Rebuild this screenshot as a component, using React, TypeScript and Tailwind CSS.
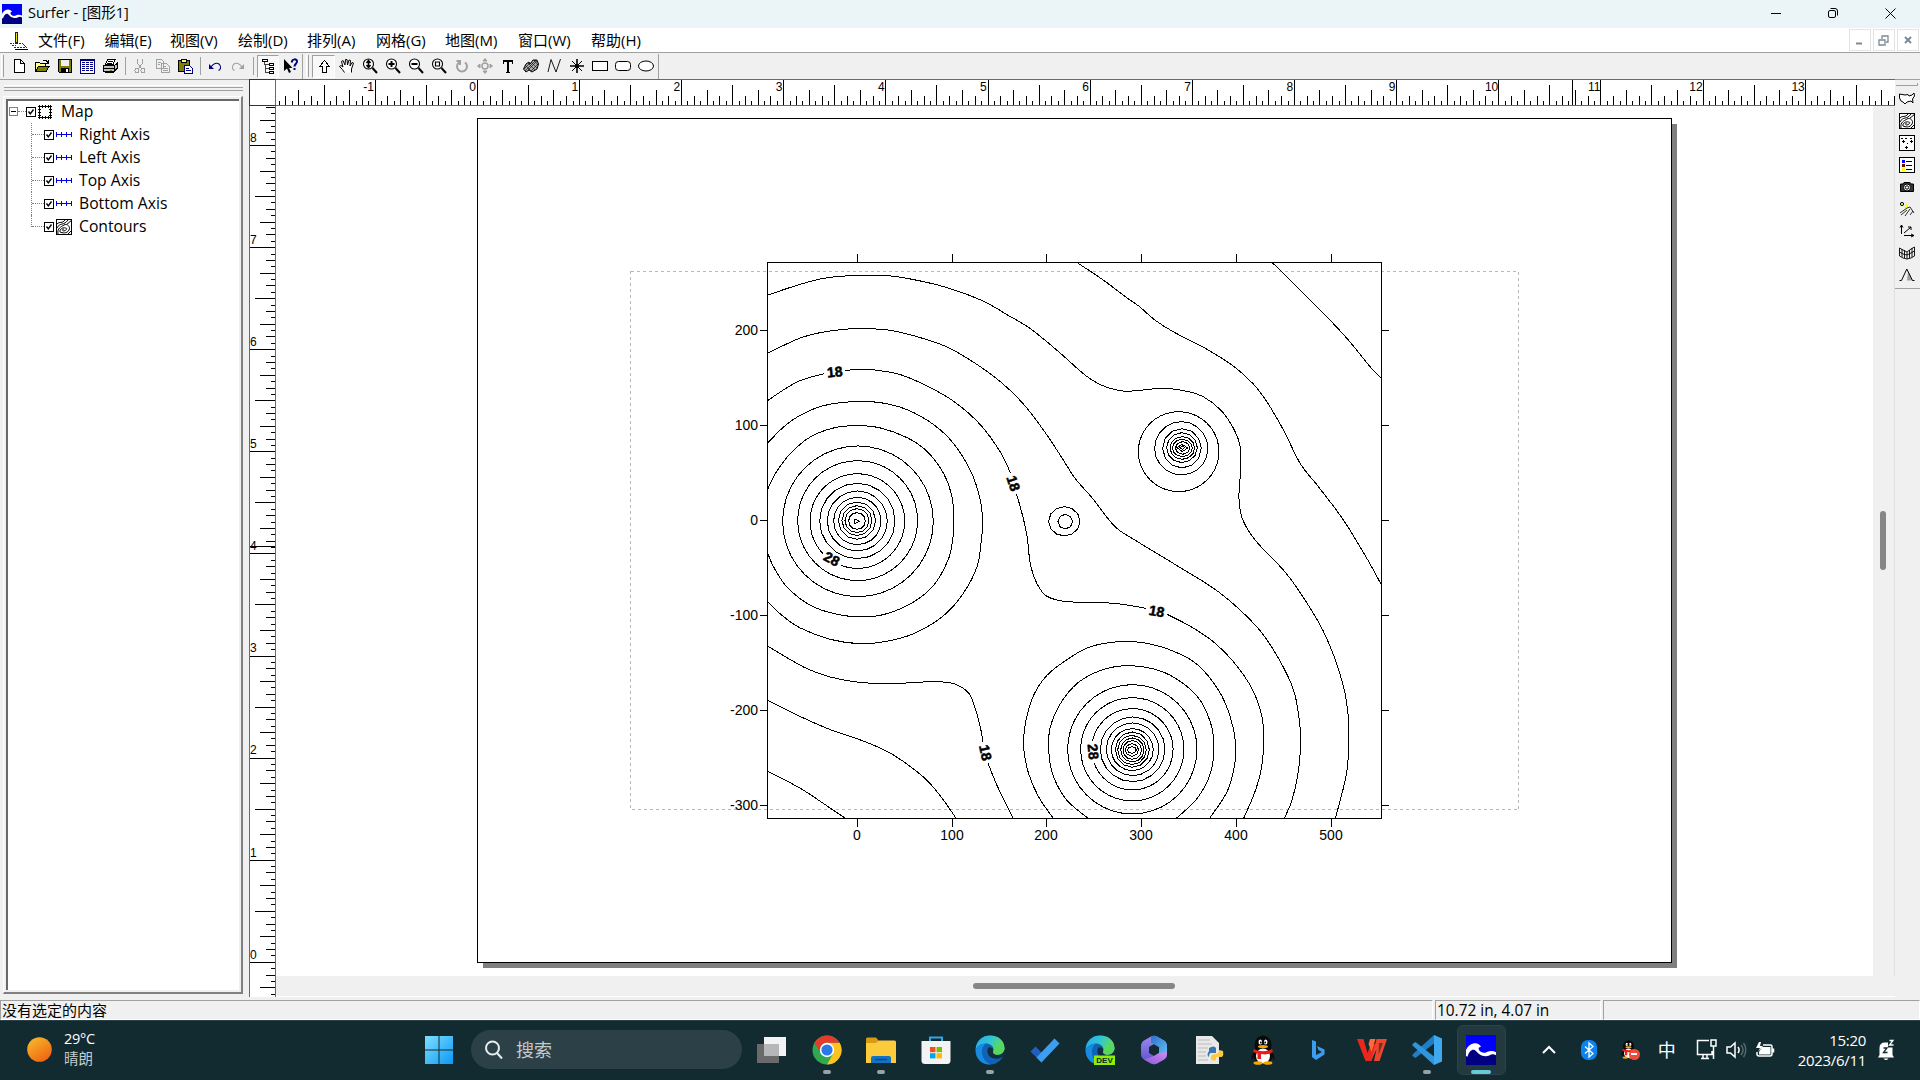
import React from "react";

type Pt = [number, number];

/* ---------- helpers ---------- */

function smooth(p: Pt[]): string {
  let d = `M${p[0][0]},${p[0][1]}`;
  for (let i = 0; i < p.length - 1; i++) {
    const a = p[i - 1] || p[i];
    const b = p[i];
    const c = p[i + 1];
    const e = p[i + 2] || c;
    d += `C${b[0] + (c[0] - a[0]) / 6},${b[1] + (c[1] - a[1]) / 6} ${c[0] - (e[0] - b[0]) / 6},${c[1] - (e[1] - b[1]) / 6} ${c[0]},${c[1]}`;
  }
  return d;
}

/* ---------- contour data (three units per pixel) ---------- */

const LINES: Pt[][] = [
  [[1657, 68], [1720, 130], [1820, 230], [1885, 300], [1950, 380], [1984, 415]],
  [[1072, 68], [1150, 120], [1220, 173], [1255, 197], [1305, 240], [1360, 275], [1460, 327], [1540, 378], [1600, 432], [1640, 485], [1690, 570], [1740, 670], [1795, 740], [1870, 840], [1943, 960], [1984, 1035]],
  [[143, 164], [230, 135], [300, 116], [360, 108], [430, 105], [510, 107], [600, 122], [690, 145], [790, 183], [860, 223], [930, 265], [1010, 330], [1095, 405], [1140, 433], [1180, 447], [1215, 453], [1260, 450], [1330, 444], [1400, 453], [1450, 470], [1500, 508], [1535, 556], [1558, 610], [1562, 660], [1559, 720], [1556, 775], [1566, 835], [1605, 900], [1690, 990], [1735, 1050], [1800, 1155], [1840, 1245], [1870, 1340], [1883, 1420], [1886, 1500], [1880, 1590], [1865, 1660], [1845, 1734]],
  [[143, 338], [235, 295], [300, 277], [370, 267], [430, 265], [510, 270], [600, 292], [680, 320], [760, 366], [840, 424], [910, 492], [970, 570], [1020, 645], [1065, 715], [1115, 772], [1183, 858], [1245, 900], [1365, 973], [1495, 1055], [1610, 1160], [1675, 1255], [1720, 1350], [1737, 1440], [1741, 1510], [1733, 1600], [1715, 1680], [1692, 1734]],
  [[143, 480], [230, 425], [312, 400]],
  [[375, 390], [410, 388], [455, 388], [540, 403], [620, 437], [700, 483], [780, 553], [840, 635], [870, 697]],
  [[888, 760], [900, 800], [915, 860], [922, 900], [930, 970], [950, 1030], [980, 1068], [1040, 1084], [1180, 1089], [1277, 1104]],
  [[1340, 1122], [1410, 1158], [1480, 1205], [1540, 1265], [1595, 1345], [1625, 1430], [1630, 1510], [1622, 1590], [1602, 1660], [1570, 1734]],
  [[143, 1218], [200, 1252], [260, 1285], [330, 1310], [400, 1324], [480, 1330], [560, 1328], [640, 1324], [700, 1330], [745, 1358], [765, 1405], [780, 1460], [788, 1505]],
  [[803, 1568], [830, 1635], [878, 1734]],
  [[143, 1380], [230, 1424], [330, 1468], [410, 1495], [490, 1528], [550, 1564], [620, 1620], [670, 1680], [707, 1734]],
  [[143, 1593], [240, 1644], [310, 1690], [375, 1734]],
  [[143, 607], [190, 560], [240, 525], [310, 496], [400, 484], [480, 487], [560, 508], [640, 553], [700, 610], [750, 690], [778, 770], [787, 842], [783, 900], [770, 980], [725, 1065], [665, 1130], [580, 1180], [500, 1203], [420, 1210], [330, 1197], [240, 1163], [185, 1125], [143, 1085]],
  [[143, 745], [165, 700], [210, 640], [270, 590], [340, 563], [410, 556], [480, 563], [560, 592], [620, 633], [670, 700], [695, 770], [701, 842], [697, 900], [683, 960], [640, 1035], [580, 1085], [500, 1120], [430, 1130], [350, 1122], [270, 1095], [200, 1040], [160, 980], [143, 940]],
  [[999, 1734], [955, 1670], [925, 1600], [912, 1540], [910, 1500], [917, 1440], [940, 1365], [980, 1305], [1040, 1258], [1100, 1223], [1160, 1208], [1220, 1204], [1280, 1209], [1360, 1233], [1430, 1272], [1495, 1350], [1530, 1430], [1546, 1510], [1542, 1580], [1520, 1655], [1468, 1734]],
  [[1103, 1734], [1040, 1680], [1000, 1610], [986, 1540], [990, 1460], [1030, 1375], [1090, 1315], [1180, 1280], [1270, 1280], [1350, 1305], [1430, 1367], [1470, 1445], [1481, 1520], [1470, 1600], [1430, 1675], [1368, 1734]],
];

const RINGS: [number, number, number, number][] = [
  [413, 843, 226, 226], [412, 841, 180, 180], [411, 842, 113, 113], [411, 842, 90, 90],
  [411, 842, 71, 71], [410, 841, 56, 56], [410, 841, 45, 45], [410, 841, 36, 36], [410, 842, 25, 25],
  [1375, 634, 121, 120], [1383, 624, 80, 80], [1385, 624, 58, 59], [1385, 622, 46, 45], [1386, 623, 37, 34],
  [1386, 623, 30, 26], [1387, 623, 22, 19],
  [1032, 843, 47, 44], [1035, 844, 22, 22],
  [1236, 1527, 194, 194], [1236, 1527, 155, 155], [1237, 1527, 97, 97], [1237, 1527, 79, 79], [1236, 1528, 63, 63],
  [1236, 1528, 51, 53], [1235, 1529, 43, 44], [1236, 1529, 35, 36], [1236, 1529, 28, 28], [1235, 1529, 20, 19], [1235, 1529, 13, 10],
];

const LABELS: [string, number, number, number][] = [
  ["18", 344, 396, -6], ["18", 880, 730, 72], ["28", 335, 957, 28],
  ["18", 1310, 1114, 10], ["18", 796, 1538, 78], ["28", 1119, 1535, 84],
];

function ring(cx: number, cy: number, rx: number, ry: number) {
  const n = rx < 25 ? 8 : rx < 60 ? 12 : rx < 120 ? 20 : 40;
  return Array.from({ length: n }, (_, i) => {
    const t = (i / n) * Math.PI * 2;
    return `${cx + Math.cos(t) * rx},${cy + Math.sin(t) * ry}`;
  }).join(" ");
}

function ContourMap() {
  const xs = [[0, 857], [100, 952], [200, 1046], [300, 1141], [400, 1236], [500, 1331]];
  const ys = [[200, 330], [100, 425], [0, 520], [-100, 615], [-200, 710], [-300, 805]];
  return (
    <svg className="block" width="1597" height="870" viewBox="276 106 1597 870" shapeRendering="crispEdges">
      <rect x="483" y="124" width="1194" height="844" fill="#808080" />
      <rect x="477.5" y="118.5" width="1194" height="844" fill="#fff" stroke="#000" />
      <rect x="630.5" y="271.5" width="888" height="538" fill="none" stroke="#b8b8b8" strokeDasharray="3 3" />
      <g transform="translate(720.3 240.3) scale(0.333333)" fill="none" stroke="#000">
        {LINES.map((l, i) => <path key={i} d={smooth(l)} vectorEffect="non-scaling-stroke" />)}
        {RINGS.map((r, i) => <polygon key={i} points={ring(...r)} vectorEffect="non-scaling-stroke" />)}
        <path d="M363 976A142 142 0 1 0 308 940" vectorEffect="non-scaling-stroke" />
        <path d="M1117 1501A122 122 0 1 1 1121 1567" vectorEffect="non-scaling-stroke" />
        <path d="M1370 622L1386 612L1402 623L1386 634ZM1379 622L1386 617L1393 622L1386 627ZM402 836L418 843L403 850Z" vectorEffect="non-scaling-stroke" />
      </g>
      <rect x="767.5" y="262.5" width="614" height="556" fill="none" stroke="#000" />
      {xs.map(([v, x]) => (
        <g key={v}>
          <rect x={x} y="254" width="1" height="8" />
          <rect x={x} y="819" width="1" height="8" />
          <text x={x} y="840" textAnchor="middle" fontSize="14" fontFamily="Liberation Sans, sans-serif">{v}</text>
        </g>
      ))}
      {ys.map(([v, y]) => (
        <g key={v}>
          <rect x="760" y={y} width="7" height="1" />
          <rect x="1382" y={y} width="7" height="1" />
          <text x="758" y={y + 5} textAnchor="end" fontSize="14" fontFamily="Liberation Sans, sans-serif">{v}</text>
        </g>
      ))}
      {LABELS.map(([t, x, y, a], i) => (
        <text key={i} transform={`translate(${720 + x / 3} ${240 + y / 3}) rotate(${a})`} y="4.8" textAnchor="middle" fontSize="14" fontWeight="700" stroke="#000" strokeWidth="0.5" fontFamily="Liberation Sans, sans-serif">{t}</text>
      ))}
    </svg>
  );
}

function tickLen(i: number) {
  const m = ((i % 16) + 16) % 16;
  if (m === 0) return 26;
  if (m === 8) return 20;
  if (m % 4 === 0) return 15;
  if (m % 2 === 0) return 9;
  return 4;
}

function TopRuler() {
  const ticks = Array.from({ length: 254 }, (_, k) => k - 31).filter((i) => 477 + i * 6.384 < 1895);
  return (
    <svg className="block" width="1619" height="27" viewBox="276 79 1619 27" shapeRendering="crispEdges">
      <rect x="276" y="79" width="1619" height="27" fill="#fff" />
      {ticks.map((i) => {
        const h = tickLen(i);
        return <rect key={i} x={Math.floor(477.3 + i * 6.384)} y={105 - h} width="1" height={h} />;
      })}
      {Array.from({ length: 15 }, (_, k) => k - 1).map((n) => (
        <text key={n} x={(n > 9 ? 476.8 : 476) + n * 102.15} y="91" textAnchor="end" fontSize="12" fontFamily="Liberation Sans, sans-serif">{n}</text>
      ))}
      <rect x="1572" y="79" width="1" height="26" />
      <rect x="276" y="79" width="1619" height="1" fill="#696969" />
      <rect x="276" y="105" width="1619" height="1" fill="#696969" />
    </svg>
  );
}

function LeftRuler() {
  const ticks = Array.from({ length: 140 }, (_, k) => k - 5);
  return (
    <svg className="block" width="27" height="891" viewBox="249 106 27 891" shapeRendering="crispEdges">
      <rect x="249" y="106" width="27" height="891" fill="#fff" />
      {ticks.map((i) => {
        const w = tickLen(i);
        return <rect key={i} x={275 - w} y={Math.floor(962.3 - i * 6.381)} width={w} height="1" />;
      })}
      {[0, 1, 2, 3, 4, 5, 6, 7, 8].map((n) => (
        <text key={n} x="250" y={958.6 - n * 102.1} fontSize="12" fontFamily="Liberation Sans, sans-serif">{n}</text>
      ))}
      <rect x="250" y="546" width="25" height="1" />
      <rect x="249" y="106" width="1" height="891" fill="#696969" />
      <rect x="275" y="106" width="1" height="891" fill="#696969" />
    </svg>
  );
}

/* ---------- small drawings ---------- */

function Ico({ children, w = 16, vb = "0 0 16 16", crisp = true }: { children: React.ReactNode; w?: number; vb?: string; crisp?: boolean }) {
  return (
    <svg width={w} height={w} viewBox={vb} fill="none" stroke="#000" shapeRendering={crisp ? "crispEdges" : "auto"} className="shrink-0">
      {children}
    </svg>
  );
}

function SurferLogo({ size }: { size: number }) {
  return (
    <svg width={size} height={size} viewBox="0 0 20 20" className="shrink-0">
      <rect width="20" height="20" fill="#0000ff" />
      <path d="M0 20V13L5 8L9 11L13 14L20 12V20Z" fill="#000080" />
      <path d="M0 14V10C1 7.500 3 6 5.500 5.500C7.500 5.300 9.500 6.300 10 8C9 7.800 8.200 8.300 8.500 9.500C9 11.200 11 12.200 13 11.800C15 11 16.500 10 20 11.500V13.500C18.500 12.500 17 12.800 15.500 13.600C13.500 14.500 11 14.200 9.200 13C7.500 12 7 10.500 5.500 9.800C3.500 9.500 2 11 1 14.500Z" fill="#fff" />
    </svg>
  );
}

const Lens = ({ children }: { children?: React.ReactNode }) => (
  <Ico crisp={false}>
    <circle cx="6.500" cy="6" r="5" strokeWidth="1.100" fill="#fff" />
    <path d="M10.500 10L15 15" strokeWidth="2" />
    {children}
  </Ico>
);

const MAIN_ICONS: React.ReactNode[] = [
  <Ico><path d="M3.500 1.500H9.500L13.500 5.500V14.500H3.500ZM9.500 1.500V5.500H13.500" fill="#fff" /></Ico>,
  <Ico><path d="M1.500 13.500V4.500H5.500L6.500 5.500H11.500V8" fill="#ffff80" /><path d="M1.500 13.500L4.500 8.500H15L12 13.500Z" fill="#808000" /><path d="M9 2.500H12L14 4.500M14 2V5H11" /></Ico>,
  <Ico><path d="M1.500 1.500H14.500V14.500H2.500L1.500 13.500Z" fill="#808000" /><path d="M4 2H12V8H4Z" fill="#f0f0f0" stroke="none" /><path d="M4 10H12V14H4Z" fill="#000" stroke="none" /><path d="M9 11H11V14H9Z" fill="#fff" stroke="none" /></Ico>,
  <Ico><path d="M1.500 1.500H15.500V15.500H1.500Z" fill="#fff" stroke="#000080" /><path d="M1 2.500H15" stroke="#000080" strokeWidth="1" /><path d="M3 4.500H6M7 4.500H10M11 4.500H14M3 6.500H6M7 6.500H10M11 6.500H14M3 8.500H6M7 8.500H10M11 8.500H14M3 10.500H6M7 10.500H10M11 10.500H14M3 12.500H6M7 12.500H10M11 12.500H14" stroke="#000080" /></Ico>,
  <Ico><path d="M5.500 1.500H13L11 6.500H3.500Z" fill="#fff" /><path d="M6 3.500H11M5 5.500H10" /><path d="M1.500 7.500H12.500L15 5.500V10.500L12.500 13.500H1.500Z" fill="#c0c0c0" /><path d="M3 14.500H12M2 10.500H12M12.500 8V13" /><path d="M8 12H10" stroke="#808000" /></Ico>,
  <i className="h-[18px] w-px bg-[#a0a0a0]" />,
  <Ico><g stroke="#a0a0a0"><path d="M5.500 1V5L9.500 11M10.500 1V5L6.500 11" /><circle cx="5" cy="12.500" r="2" /><circle cx="11" cy="12.500" r="2" /></g></Ico>,
  <Ico><g stroke="#a0a0a0" fill="#f0f0f0"><path d="M1.500 1.500H6.500L8.500 3.500V10.500H1.500ZM6.500 5.500H11.500L14.500 8.500V14.500H6.500Z" /><path d="M3 4.500H6M3 6.500H5M8 8.500H11M8 10.500H13M8 12.500H13" /></g></Ico>,
  <Ico><path d="M1.500 2.500H12.500V13.500H1.500Z" fill="#808000" /><path d="M4.500 1.500H9.500V4.500H4.500Z" fill="#ffff80" /><path d="M7.500 7.500H12.500L15.500 10.500V15.500H7.500Z" fill="#fff" stroke="#000080" /><path d="M9 10.500H12M9 12.500H14" stroke="#000080" /></Ico>,
  <i className="h-[18px] w-px bg-[#a0a0a0]" />,
  <Ico crisp={false}><path d="M2 6V11H7Z" fill="#000080" stroke="none" /><path d="M4 9C6 5.500 10 4 12.500 6.500C14.500 9 13.500 11.500 11.500 12.500" stroke="#000080" strokeWidth="1.100" /></Ico>,
  <Ico crisp={false}><path d="M14 6V11H9Z" fill="#a0a0a0" stroke="none" /><path d="M12 9C10 5.500 6 4 3.500 6.500C1.500 9 2.500 11.500 4.500 12.500" stroke="#a0a0a0" strokeWidth="1.100" /></Ico>,
  <i className="h-[18px] w-px bg-[#a0a0a0]" />,
  <Ico><path d="M2.500 1.500H7.500V3.500H2.500ZM9.500 5.500H13.500V7.500H9.500ZM9.500 9.500H13.500V11.500H9.500ZM9.500 13.500H13.500V15.500H9.500Z" fill="#fff" /><path d="M4.500 4V6.500H9M5.500 6V14.500H9M5.500 10.500H9" stroke="#444" /></Ico>,
  <Ico crisp={false}><path d="M1 1V13L4 10.500L6 15L8 14L6 10H9.500Z" fill="#000" stroke="none" /><path d="M8.800 4.500C8.800 .5 14.200 .5 14 3.500C13.800 6 11.500 6 11.500 8.500M11.500 10V12" stroke="#000080" strokeWidth="2" /></Ico>,
];

const DRAW_ICONS: React.ReactNode[] = [
  <Ico><path d="M8.500 2.500L13.500 8.500H10.500V14.500H6.500V8.500H3.500Z" fill="#fff" /></Ico>,
  <Ico crisp={false}><path d="M5.500 14.500L3.500 11.500L.5 8.500L2 7.500L4 9L2.500 3.500L4 2.500L6 7L6.500 1.500H8L8.500 7L10 2L11.500 2.500L11 8L13 4.500L14.500 5L12.500 11V14.500" fill="#fff" /></Ico>,
  <Lens><path d="M6.500 2.500V9.500M4.500 5L6.500 2.500L8.500 5M4.500 7L6.500 9.500L8.500 7" strokeWidth="1.500" /></Lens>,
  <Lens><path d="M3.500 6H9.500M6.500 3V9" strokeWidth="2" /></Lens>,
  <Lens><path d="M3.500 6H9.500" strokeWidth="2" /></Lens>,
  <Lens><path d="M4.500 4H8.500V8H4.500Z" strokeWidth="1.200" /></Lens>,
  <Ico crisp={false}><path d="M5 4.500A5 5 0 1 0 11 4.500M2.500 3H6V7" stroke="#a0a0a0" strokeWidth="2" /></Ico>,
  <Ico crisp={false}><g stroke="#a0a0a0"><circle cx="8" cy="8" r="3" strokeWidth="1.500" /><path d="M8 .5L10 3H6ZM8 15.500L10 13H6ZM.5 8L3 6V10ZM15.500 8L13 6V10Z" fill="#a0a0a0" /></g></Ico>,
  <Ico><path d="M3 3H13M8 3V14" strokeWidth="2" /><path d="M3.500 2V6M12.500 2V6M6 14H10" /></Ico>,
  <Ico crisp={false}><path d="M.5 11L3 6L6 4L7 6L10 2H14L15.500 6L14 11L9 14L6 12L3 14Z" fill="#aaa" /><path d="M1 11L7 5M2 13L13 2M5 12L14 3M8 13L15 6M2 7L8 13M5 5L12 12M8 4L14 10M11 2L15 7" strokeWidth=".6" /></Ico>,
  <Ico crisp={false}><path d="M2 14L5 1.500L10 14L14.500 1" strokeWidth=".9" /></Ico>,
  <Ico crisp={false}><path d="M8 1V15M1 8H15" strokeWidth="1.600" /><path d="M3 3L13 13M13 3L3 13" /><circle cx="8" cy="8" r="1.500" fill="#000" /></Ico>,
  <Ico><path d="M.5 3.500H15.500V12.500H.5Z" fill="#fff" /></Ico>,
  <Ico crisp={false}><rect x=".5" y="3.500" width="15" height="9" rx="3" fill="#fff" /></Ico>,
  <Ico crisp={false}><ellipse cx="8" cy="8" rx="7.500" ry="5" fill="#fff" /></Ico>,
];

const ContourGlyph = () => (
  <Ico crisp={false}>
    <rect x=".5" y=".5" width="15" height="15" fill="#fff" />
    <path d="M1 5C4 2 6 5 9 1M1 9C4 3 8 7 12 1M11 5C14 4 13 2 15 2M2 15C1 9 5 8 8 6C11 4 15 8 13 11C11 15 6 14 4 13C3 10 8 8 9 9C12 9 11 11 8 12C6 12 6 10 8 10M12 15L15 12" />
  </Ico>
);

const SIDE_ICONS: React.ReactNode[] = [
  <Ico crisp={false}><path d="M.5 3L6 4L9 3.500L10 5L13 4L15 2L15.500 5L13.500 8L14 12L12 10L8 11L6 13L4 11L2 10L.5 7Z" fill="#fff" /></Ico>,
  <ContourGlyph />,
  <Ico><rect x=".5" y=".5" width="15" height="15" fill="#fff" /><path d="M2 3H4M6 3H8M11 3H13M3 6.500H6M4.500 5V8M11 6.500H14M12.500 5V8M6 12.500H9M7.500 11V14M8 8H9" /></Ico>,
  <Ico><rect x=".5" y=".5" width="15" height="15" fill="#fff" /><path d="M3 4.500H6" stroke="#00f" strokeWidth="3" /><path d="M3 8.500H6" stroke="#800000" strokeWidth="3" /><path d="M3 12.500H6" stroke="#ff0" strokeWidth="3" /><path d="M7 4.500H13M7 8.500H13M7 12.500H13" /></Ico>,
  <Ico crisp={false}><path d="M1.500 5H4L5 3.500H11L12 5H14.500V12.500H1.500Z" fill="#333" /><circle cx="8" cy="8.500" r="3.500" fill="#fff" /><circle cx="8" cy="8.500" r="1.700" /></Ico>,
  <Ico crisp={false}><circle cx="3" cy="3" r="1.600" fill="#ff0" /><path d="M6 5L9 3M5 7L9 5" stroke="#ff0" strokeWidth="1.300" /><path d="M1 12L8 7L11 6L15 12M2 14L8 9M6 15L11 8M11 14L14 10" strokeWidth=".8" /></Ico>,
  <Ico crisp={false}><path d="M2.500 11V2M1 4.500L2.500 2L4 4.500M5 12.500H15M12 11L15 12.500L12 14M5 10L12 4M9 4H12V7" /></Ico>,
  <Ico crisp={false}><path d="M.5 3L4 5L8 7L12 4L15.500 2V11L12 13L8 14L4 13L.5 11ZM.5 7L4 9L8 10L12 8L15.500 6M3 4V12M5.500 5V13M8 7V14M10.500 5V13M13 3V12" fill="none" strokeWidth=".9" /></Ico>,
  <Ico crisp={false}><path d="M9 4L8 13.500H13L10 6Z" fill="#a0a0a0" stroke="none" /><path d="M.5 13.500H2.500L7.800 2L13.500 13.500H15.500" /></Ico>,
];

const AxisGlyph = () => (
  <Ico><path d="M0 7.500H16M.5 5V10M5.500 5V10M10.500 5V10M15.500 5V10" stroke="#0000e0" /></Ico>
);

const Check = () => (
  <svg width="10" height="10" viewBox="0 0 10 10" className="shrink-0">
    <rect x=".5" y=".5" width="9" height="9" fill="#fff" stroke="#000" />
    <path d="M2.500 4.500L4.300 6.800L7.500 2.500" fill="none" stroke="#000" strokeWidth="1.400" />
  </svg>
);

/* ---------- panels ---------- */

const MENUS: [string, string][] = [
  ["文件(F)", "w-[66.5px]"], ["编辑(E)", "w-[65.5px]"], ["视图(V)", "w-[68px]"], ["绘制(D)", "w-[69px]"], ["排列(A)", "w-[69px]"],
  ["网格(G)", "w-[69px]"], ["地图(M)", "w-[73px]"], ["窗口(W)", "w-[73px]"], ["帮助(H)", "w-[70px]"],
];

function Tree() {
  const rows = ["Right Axis", "Left Axis", "Top Axis", "Bottom Axis", "Contours"];
  return (
    <div className="flex w-[249px] shrink-0 flex-col border-t border-[#a0a0a0] pl-[3px] pr-[6px]">
      <div className="mt-[5px] ml-px h-[3px] border-b border-t border-[#a0a0a0] border-t-white" />
      <div className="ml-px h-[3px] border-b border-[#a0a0a0]" />
      <div className="mt-[5px] h-[898px] border-b-2 border-l border-r-2 border-t border-[#808080] border-l-white border-t-white p-[2px]">
        <div className="h-full border-l-2 border-t-2 border-[#696969] bg-white text-[15.7px]">
          <div className="-mt-px flex h-[23px] items-center pl-px">
            <span className="flex h-[9px] w-[9px] items-center justify-center border border-[#808080]"><i className="h-px w-[5px] bg-black" /></span>
            <span className="w-[8px] border-b border-dotted border-[#808080]" />
            <Check />
            <svg width="16" height="16" viewBox="0 0 16 16" className="ml-[1px]" shapeRendering="crispEdges" fill="none" stroke="#000">
              <path d="M1 2.500H15M1 13.500H15M2.500 1V15M13.500 1V15M5.500 1V4M8.500 1V4M11 1V4M5.500 12V15M8.500 12V15M11 12V15M1 5.500H4M1 8.500H4M1 11H4M12 5.500H15M12 8.500H15M12 11H15" />
            </svg>
            <span className="ml-[8px]">Map</span>
          </div>
          {rows.map((r, i) => (
            <div key={r} className="flex h-[23px] items-center pl-[23px]">
              <span className={i === 4 ? "h-[12px] w-px self-start border-l border-dotted border-[#808080]" : "h-full w-px border-l border-dotted border-[#808080]"} />
              <span className="w-[12px] border-b border-dotted border-[#808080]" />
              <Check />
              <span className="ml-[2px]">{i === 4 ? <ContourGlyph /> : <AxisGlyph />}</span>
              <span className="ml-[7px] whitespace-nowrap">{r}</span>
            </div>
          ))}
        </div>
      </div>
    </div>
  );
}

/* ---------- taskbar icons, 30x30 ---------- */

const T = ({ children, vb = "0 0 30 30" }: { children: React.ReactNode; vb?: string }) => (
  <svg width="30" height="30" viewBox={vb}>{children}</svg>
);

const Edge = ({ dev = false }: { dev?: boolean }) => (
  <T>
    <defs>
      <linearGradient id={dev ? "eg1" : "eg0"} x1="0" y1="0" x2="1" y2=".4"><stop offset="0" stopColor="#28a8ea" /><stop offset=".5" stopColor="#2fc4d8" /><stop offset="1" stopColor="#63de4e" /></linearGradient>
    </defs>
    <circle cx="15" cy="15" r="14.500" fill="#0f62b8" />
    <path d="M.6 15C1 5 8 .5 15 .5C24 .5 29.500 6 29.500 13C29.500 18 25 20.500 20.500 19.500C17 18.500 18.500 16.500 18.500 14.500C18.500 11 15 8.500 11 8.500C6 8.500 1.500 11.500 .6 15Z" fill={dev ? "url(#eg1)" : "url(#eg0)"} />
    <path d="M.6 15C2 10.500 7 8.500 11 8.500C8 10.500 6.500 14 7 18C7.500 23 11 28 16 29.400C7 30 .5 24 .6 15Z" fill="#178be0" />
    <path d="M13 13C10.500 18.500 15 25 24 23.500C26 23 27 22.500 28 21.500L29.500 20L29.500 14C28 19 24.500 20.500 20.500 19.500C17 18.500 18.500 16.500 18.500 14.500C17.500 12.500 14.500 11.500 13 13Z" fill="#122b31" opacity=".9" />
    <path d="M18.500 14.500C18.500 16.500 17 18.500 20.500 19.500C25 20.500 29.500 18 29.500 13L27 8Z" fill="#58d85a" />
    {dev && <><rect x="9" y="20.500" width="21" height="9.500" fill="#8cf000" /><text x="19.500" y="28.200" textAnchor="middle" fontSize="8" fontWeight="700" fontFamily="Liberation Sans, sans-serif" fill="#123">DEV</text></>}
  </T>
);

const Penguin = ({ w = 30 }: { w?: number }) => (
  <svg width={w} height={w} viewBox="0 0 30 30">
    <path d="M5 18C3 21 2.500 25 4.500 24.500L7 21ZM25 18C27 21 27.500 25 25.500 24.500L23 21Z" fill="#111" />
    <ellipse cx="15" cy="10" rx="8.500" ry="9.500" fill="#0a0a0a" /><ellipse cx="15" cy="20" rx="10" ry="9" fill="#0a0a0a" />
    <ellipse cx="15" cy="21" rx="7" ry="7.500" fill="#fff" />
    <ellipse cx="12.300" cy="7" rx="1.800" ry="2.600" fill="#fff" /><ellipse cx="17.700" cy="7" rx="1.800" ry="2.600" fill="#fff" />
    <circle cx="12.800" cy="7.500" r=".9" /><circle cx="17.200" cy="7.500" r=".9" />
    <ellipse cx="15" cy="11.500" rx="5" ry="1.600" fill="#f5a800" />
    <path d="M6 14C11 17 19 17 24 14L25 17C19 20 17 19.500 13 19V24H9.500V18.500L5 17Z" fill="#e81c1c" />
    <ellipse cx="10" cy="28" rx="4.500" ry="1.800" fill="#f5a800" /><ellipse cx="20" cy="28" rx="4.500" ry="1.800" fill="#f5a800" />
  </svg>
);

const APPS: { icon: React.ReactNode; dot?: boolean; active?: boolean }[] = [
  { icon: <T><rect x="0" y="9" width="22" height="19" fill="#6a6a6a" /><rect x="7" y="2" width="22" height="19" fill="#f2f2f2" /><rect x="7" y="9" width="15" height="12" fill="#b5b8b8" /></T> },
  { icon: <T><circle cx="15" cy="15" r="14.500" fill="#2fa84f" /><path d="M15 7.700H27.600A14.500 14.500 0 0 1 15 29.500L21.300 18.600Z" fill="#fcc31e" /><path d="M2.500 7.700A14.500 14.500 0 0 1 27.600 7.700H15C11 7.700 9 10 8.300 13.500L8 17Z" fill="#e33b2e" /><circle cx="15" cy="15" r="7.200" fill="#fff" /><circle cx="15" cy="15" r="5.600" fill="#2b78e8" /></T>, dot: true },
  { icon: <T><path d="M0 4Q0 2.500 1.500 2.500H10L13 6H28V10H0Z" fill="#d89a12" /><path d="M0 8H10L13 5.500H28.500Q30 5.500 30 7V28H0Z" fill="#fccb3c" /><path d="M5 28V23Q5 21 7 21H23Q25 21 25 23V28Z" fill="#1272c4" /><path d="M9 24.500H21" stroke="#0a4b8c" strokeWidth="1.500" /></T>, dot: true },
  { icon: <T><path d="M9 7V2.500H21V7" fill="none" stroke="#30a8e8" strokeWidth="2" /><path d="M.5 6H29.500V25.500Q29.500 29 26 29H4Q.5 29 .5 25.500Z" fill="#f3f3f3" /><path d="M9 12H14.500V17.200H9Z" fill="#f25022" /><path d="M15.500 12H21V17.200H15.500Z" fill="#7fba00" /><path d="M9 18.200H14.500V23.400H9Z" fill="#00a4ef" /><path d="M15.500 18.200H21V23.400H15.500Z" fill="#ffb900" /></T> },
  { icon: <Edge />, dot: true },
  { icon: <T><path d="M.5 16.500L5.500 11.500L14 20L11.500 27.500Z" fill="#1e5fc0" /><path d="M6.500 22.500L24.500 3.500L29.500 8.500L11.500 27.500Z" fill="#3d9df0" /></T> },
  { icon: <Edge dev /> },
  {
    icon: (
      <T>
        <defs>
          <linearGradient id="ma" x1="0" y1="0" x2="0" y2="1"><stop offset="0" stopColor="#9a8cf0" /><stop offset="1" stopColor="#5d4cc8" /></linearGradient>
          <linearGradient id="mb" x1="0" y1="0" x2="1" y2="1"><stop offset="0" stopColor="#2f6fd0" /><stop offset="1" stopColor="#5cc0f0" /></linearGradient>
          <linearGradient id="mc" x1="0" y1="1" x2="1" y2="0"><stop offset="0" stopColor="#8a5ad8" /><stop offset="1" stopColor="#d08af0" /></linearGradient>
        </defs>
        <path fillRule="evenodd" d="M12 1.500Q15 0 18 1.500L25 5.500Q28 7.500 28 11V19Q28 22.500 25 24.500L18 28.500Q15 30 12 28.500L5 24.500Q2 22.500 2 19V11Q2 7.500 5 5.500ZM15 9L10 12V18L15 21L20 18V12Z" fill="url(#ma)" />
        <path d="M12 1.500Q15 0 18 1.500L25 5.500Q28 7.500 28 11V19L20 18V12L12 7.500Z" fill="url(#mb)" />
        <path d="M28 17V19Q28 22.500 25 24.500L18 28.500Q15 30 12 28.500L5 24.500L15 21L20 18Z" fill="url(#mc)" />
      </T>
    ),
  },
  { icon: <T><path d="M2 1H18L25 8V29H2Z" fill="#e8e8e8" /><path d="M4 5H16M4 9H18M4 13H14M4 17H12M4 21H12M4 25H14" stroke="#bbb" /><path d="M15 13Q20 10 22 13V18H17Q15 18 15 22Q12 20 15 16Z" fill="#3a76ac" /><path d="M29 16Q30 22 27 22H22V25Q19 27 17 24V21Q18 19 22 19Q25 19 25 15Z" fill="#fdca3c" /></T> },
  { icon: <Penguin w={30} /> },
  { icon: <T><path d="M9 5L13 6.500V20L19 17L15.500 15L14 11L21.500 14.500V19.500L13 25L9 22Z" fill="#3a9df0" /></T> },
  { icon: <T><path d="M0 4H6.500L10.500 18L14 9H19L14.500 26H8.500Z" fill="#e8281c" /><path d="M14 26L19.500 4H30L22.500 26H17L19.500 14Z" fill="#f0452c" /><path d="M13 4H18.500L14.500 17L11.500 9Z" fill="#ff6a3c" /><path d="M22 8H26L21.500 20Z" fill="#122b31" opacity=".6" /></T> },
  { icon: <T><path d="M22 0V8.500L3.500 23L.5 21V19.500L22 0Z" fill="#1f7fc4" /><path d="M22 30V21.500L3.500 7L.5 9V10.500L22 30Z" fill="#2f95dc" /><path d="M22 0L30 3.500V26.500L22 30Z" fill="#3fa9f0" /></T>, dot: true },
  { icon: <SurferLogo size={30} />, active: true },
];

function Taskbar() {
  return (
    <div className="flex h-[60px] items-center border-t border-[#2a4147] bg-[#122b31] pb-[2px] text-white">
      <div className="flex w-[411px] items-center pl-[27px]">
        <svg width="25" height="25" viewBox="0 0 25 25"><defs><linearGradient id="sun" x1="0" y1="0" x2=".7" y2="1"><stop offset="0" stopColor="#f8c030" /><stop offset="1" stopColor="#ef6410" /></linearGradient></defs><circle cx="12.500" cy="12.500" r="12.300" fill="url(#sun)" /></svg>
        <div className="ml-[12px] text-[14.5px] leading-[20px] -mt-px">
          <div className="tracking-[-0.3px]">29°C</div>
          <div className="text-[#c5ccce]">晴朗</div>
        </div>
      </div>
      <div className="flex w-[55px] justify-center">
        <svg width="30" height="30" viewBox="0 0 30 30"><defs><linearGradient id="win" x1="0" y1="0" x2="1" y2="1"><stop offset="0" stopColor="#80deff" /><stop offset="1" stopColor="#0c98f5" /></linearGradient></defs><path d="M1 1H14.500V14.500H1ZM15.500 1H29V14.500H15.500ZM1 15.500H14.500V29H1ZM15.500 15.500H29V29H15.500Z" fill="url(#win)" /></svg>
      </div>
      <div className="ml-[5px] flex h-[39px] w-[271px] items-center rounded-full bg-[#2c4147] pl-[13px]">
        <svg width="20" height="20" viewBox="0 0 20 20" fill="none" stroke="#e8ecec" strokeWidth="2"><circle cx="8.500" cy="8" r="6.500" /><path d="M13 13L18 18.500" /></svg>
        <span className="ml-[12px] text-[18px] text-[#c3cacc]">搜索</span>
      </div>
      <div className="ml-[3px] flex">
        {APPS.map((a, i) => (
          <div key={i} className="flex h-[57px] w-[54.55px] items-center justify-center">
            <div className={a.active ? "flex h-[50px] w-[49px] flex-col items-center rounded-md border border-[#2c434a] bg-[#233940] pt-[9px]" : "flex h-[50px] w-[49px] flex-col items-center pt-[10px]"}>
              {a.icon}
              {a.dot && <i className="mt-[5px] h-[4px] w-[8px] rounded-full bg-[#98a3a6]" />}
              {a.active && <i className="mt-[5px] h-[4px] w-[20px] rounded-full bg-[#65cbd8]" />}
            </div>
          </div>
        ))}
      </div>
      <div className="ml-[33px] flex flex-1 items-center">
        <svg width="14" height="10" viewBox="0 0 14 10" fill="none" stroke="#fff" strokeWidth="2"><path d="M1 8L7 2L13 8" /></svg>
        <svg className="ml-[25px]" width="16" height="20" viewBox="0 0 16 20"><rect width="16" height="20" rx="7" fill="#0a84f0" /><path d="M4 6.500L12 13.500L8 17V3L12 6.500L4 13.500" fill="none" stroke="#fff" strokeWidth="1.300" /></svg>
        <div className="relative ml-[22px] h-[20px] w-[20px]">
          <Penguin w={19} />
          <i className="absolute bottom-0 right-[-1px] flex h-[11px] w-[11px] items-center justify-center rounded-full bg-[#f04a3a]"><b className="h-[2px] w-[6px] bg-white" /></i>
        </div>
        <span className="ml-[19px] w-[18px] text-[18px] leading-none">中</span>
        <svg className="ml-[20px]" width="21" height="21" viewBox="0 0 21 21" fill="none" stroke="#fff" strokeWidth="1.500"><path d="M13 1.500H1.500V15.500H16V12M5 19.500H13M7 16V19M11 16V19M15 1H20V7H15ZM17.500 7V20" /></svg>
        <svg className="ml-[9px]" width="21" height="18" viewBox="0 0 21 18" fill="none" stroke="#fff" strokeWidth="1.500"><path d="M1 6H4.500L9 2V16L4.500 12H1ZM12 6C13.500 8 13.500 10 12 12" /><path d="M15 4C17.500 7 17.500 11 15 14M17.500 2C20.500 6 20.500 12 17.500 16" stroke="#55676c" /></svg>
        <svg className="ml-[8px]" width="20" height="18" viewBox="0 0 20 18" fill="none" stroke="#fff" strokeWidth="1.500"><path d="M8 4H15.500Q17 4 17 6V13Q17 15 15 15H4Q2 15 2 13V11M18.500 7.500V11.500" /><path d="M7 6H15.500V13.500H4V11Z" fill="#fff" stroke="none" /><path d="M4 1L1 7H5L3 11L8 5H5L6 1Z" fill="#fff" stroke="none" /></svg>
        <div className="ml-auto w-[80px] text-right text-[15px] leading-[20px] tracking-[-0.3px]">
          <div>15:20</div>
          <div>2023/6/11</div>
        </div>
        <svg className="ml-[11px] mr-[25px]" width="18" height="22" viewBox="0 0 18 22"><path d="M2.500 16V9Q2.500 3.500 8 3.500H11V8.500H15.500V16L17 18.500H1ZM6.500 19.500H11.500Q9 22.500 6.500 19.500Z" fill="#fff" /><path d="M12.500 1.500H16L12.500 6H16.500" fill="none" stroke="#fff" strokeWidth="1.300" /><path d="M6.500 9H10L6.500 13.500H10.500" fill="none" stroke="#122b31" strokeWidth="1.300" /></svg>
      </div>
    </div>
  );
}

export default function App() {
  return (
    <div className="flex h-[1080px] w-[1920px] flex-col overflow-hidden bg-[#f0f0f0] font-['Open_Sans','Noto_Sans_CJK_SC',sans-serif] text-[15px] leading-none text-black">
      {/* title bar */}
      <div className="flex h-[28px] shrink-0 items-center bg-[#ebf4f7]">
        <div className="ml-[2px]"><SurferLogo size={20} /></div>
        <span className="ml-[6px] pb-px text-[14.5px]">Surfer - [图形1]</span>
        <div className="ml-auto flex items-center gap-[47px] pb-[2px] pr-[24px]">
          <i className="h-px w-[10px] bg-black" />
          <svg width="10" height="10" viewBox="0 0 10 10" fill="none" stroke="#000"><rect x=".5" y="2.500" width="7" height="7" rx="1.500" /><path d="M2.500 .5H7Q9.500 .5 9.500 3V7.500" /></svg>
          <svg width="11" height="11" viewBox="0 0 11 11" stroke="#000"><path d="M.5 .5L10.500 10.500M10.500 .5L.5 10.500" /></svg>
        </div>
      </div>
      {/* menu bar */}
      <div className="flex h-[25px] shrink-0 items-center border-b border-[#a0a0a0] bg-white">
        <div className="ml-[9px] w-[29px]">
          <svg width="19" height="19" viewBox="0 0 19 19" shapeRendering="crispEdges"><path d="M1 12.500H5M3 14.500H7M5 16.500H18M10 12.500L14 13L18 17" fill="none" stroke="#333" strokeDasharray="2 1" /><path d="M6 18.500H19" stroke="#000" /><path d="M7.500 1V13" stroke="#222" strokeWidth="3" /><path d="M7.500 2V11" stroke="#e8e000" /></svg>
        </div>
        {MENUS.map(([m, w]) => <span key={m} className={`${w} whitespace-nowrap`}>{m}</span>)}
        <div className="ml-auto flex gap-[2px] pr-px">
          {["M2 9.500H8", "M1 6H7V11H1ZM4 5V2H10V8H8", "M3 3L9 9M9 3L3 9"].map((d, i) => (
            <span key={d} className="flex h-[22px] w-[22px] items-center justify-center border border-[#e3e3e3]">
              <svg width="12" height="12" viewBox="0 0 12 12"><path d={d} fill="none" stroke="#7b8a96" strokeWidth={i === 1 ? 1.3 : 2} /></svg>
            </span>
          ))}
        </div>
      </div>
      {/* toolbars */}
      <div className="flex h-[26px] shrink-0 items-center">
        <i className="ml-[1px] h-[22px] w-[3px] border-r border-[#a0a0a0] border-l border-l-white" />
        <div className="ml-[4px] flex items-center">
          {MAIN_ICONS.map((ic, i) =>
            [5, 9, 12].includes(i) ? (
              <span key={i} className="flex w-[7.3px] justify-center">{ic}</span>
            ) : (
              <span key={i} className={i === 13 ? "flex h-[23px] w-[22.7px] items-center justify-center border border-[#fff] border-l-[#a0a0a0] border-t-[#a0a0a0] bg-[#f8f8f8]" : "flex h-[23px] w-[22.7px] items-center justify-center"}>{ic}</span>
            )
          )}
        </div>
        <i className="h-[25px] w-px bg-[#a0a0a0]" />
        <i className="ml-[3px] h-[22px] w-[3px] border-r border-[#a0a0a0] border-l border-l-white" />
        <div className="ml-[3px] flex items-center">
          {DRAW_ICONS.map((ic, i) => (
            <span key={i} className={i === 0 ? "flex h-[23px] w-[23px] items-center justify-center border border-[#fff] border-l-[#a0a0a0] border-t-[#a0a0a0] bg-[#f8f8f8]" : "flex h-[23px] w-[23px] items-center justify-center"}>{ic}</span>
          ))}
        </div>
        <i className="ml-[1px] h-[25px] w-px bg-[#a0a0a0]" />
      </div>
      {/* work area */}
      <div className="flex h-[918px] shrink-0">
        <Tree />
        <div className="flex w-[1646px] shrink-0 flex-col">
          <div className="flex">
            <div className="h-[27px] w-[27px] border border-[#333] border-r-[#696969] bg-white" />
            <TopRuler />
          </div>
          <div className="flex">
            <LeftRuler />
            <div className="w-[1619px]">
              <div className="flex bg-[#f0f0f0]">
                <div className="bg-white"><ContourMap /></div>
                <div className="w-[22px] border-r border-[#e0e0e0] pl-[7px] pt-[405px]">
                  <div className="h-[59px] w-[6px] rounded-sm bg-[#868686]" />
                </div>
              </div>
              <div className="h-[21px] border-b border-white pl-[697px] pt-[7px]">
                <div className="h-[6px] w-[202px] rounded-sm bg-[#868686]" />
              </div>
            </div>
          </div>
        </div>
        <div className="flex w-[25px] flex-col border-t border-[#a0a0a0] pt-[3px]">
          <i className="ml-px h-[3px] w-[22px] border-b border-r border-[#a0a0a0]" />
          <div className="flex flex-col items-center border-b border-[#a0a0a0] pb-[2px] pr-px pt-[2px]">
            {SIDE_ICONS.map((ic, i) => <span key={i} className="flex h-[22px] items-center">{ic}</span>)}
          </div>
        </div>
      </div>
      {/* status bar */}
      <div className="flex h-[23px] shrink-0 gap-[2px] pt-[3px]">
        <div className="flex w-[1433px] items-center border border-white border-l-[#a0a0a0] border-t-[#a0a0a0] pl-[1px]">没有选定的内容</div>
        <div className="flex w-[166px] items-center border border-white border-l-[#a0a0a0] border-t-[#a0a0a0] pl-[1px] pt-px text-[15.4px]">10.72 in, 4.07 in</div>
        <div className="flex-1 border border-white border-l-[#a0a0a0] border-t-[#a0a0a0]" />
      </div>
      <Taskbar />
    </div>
  );
}
